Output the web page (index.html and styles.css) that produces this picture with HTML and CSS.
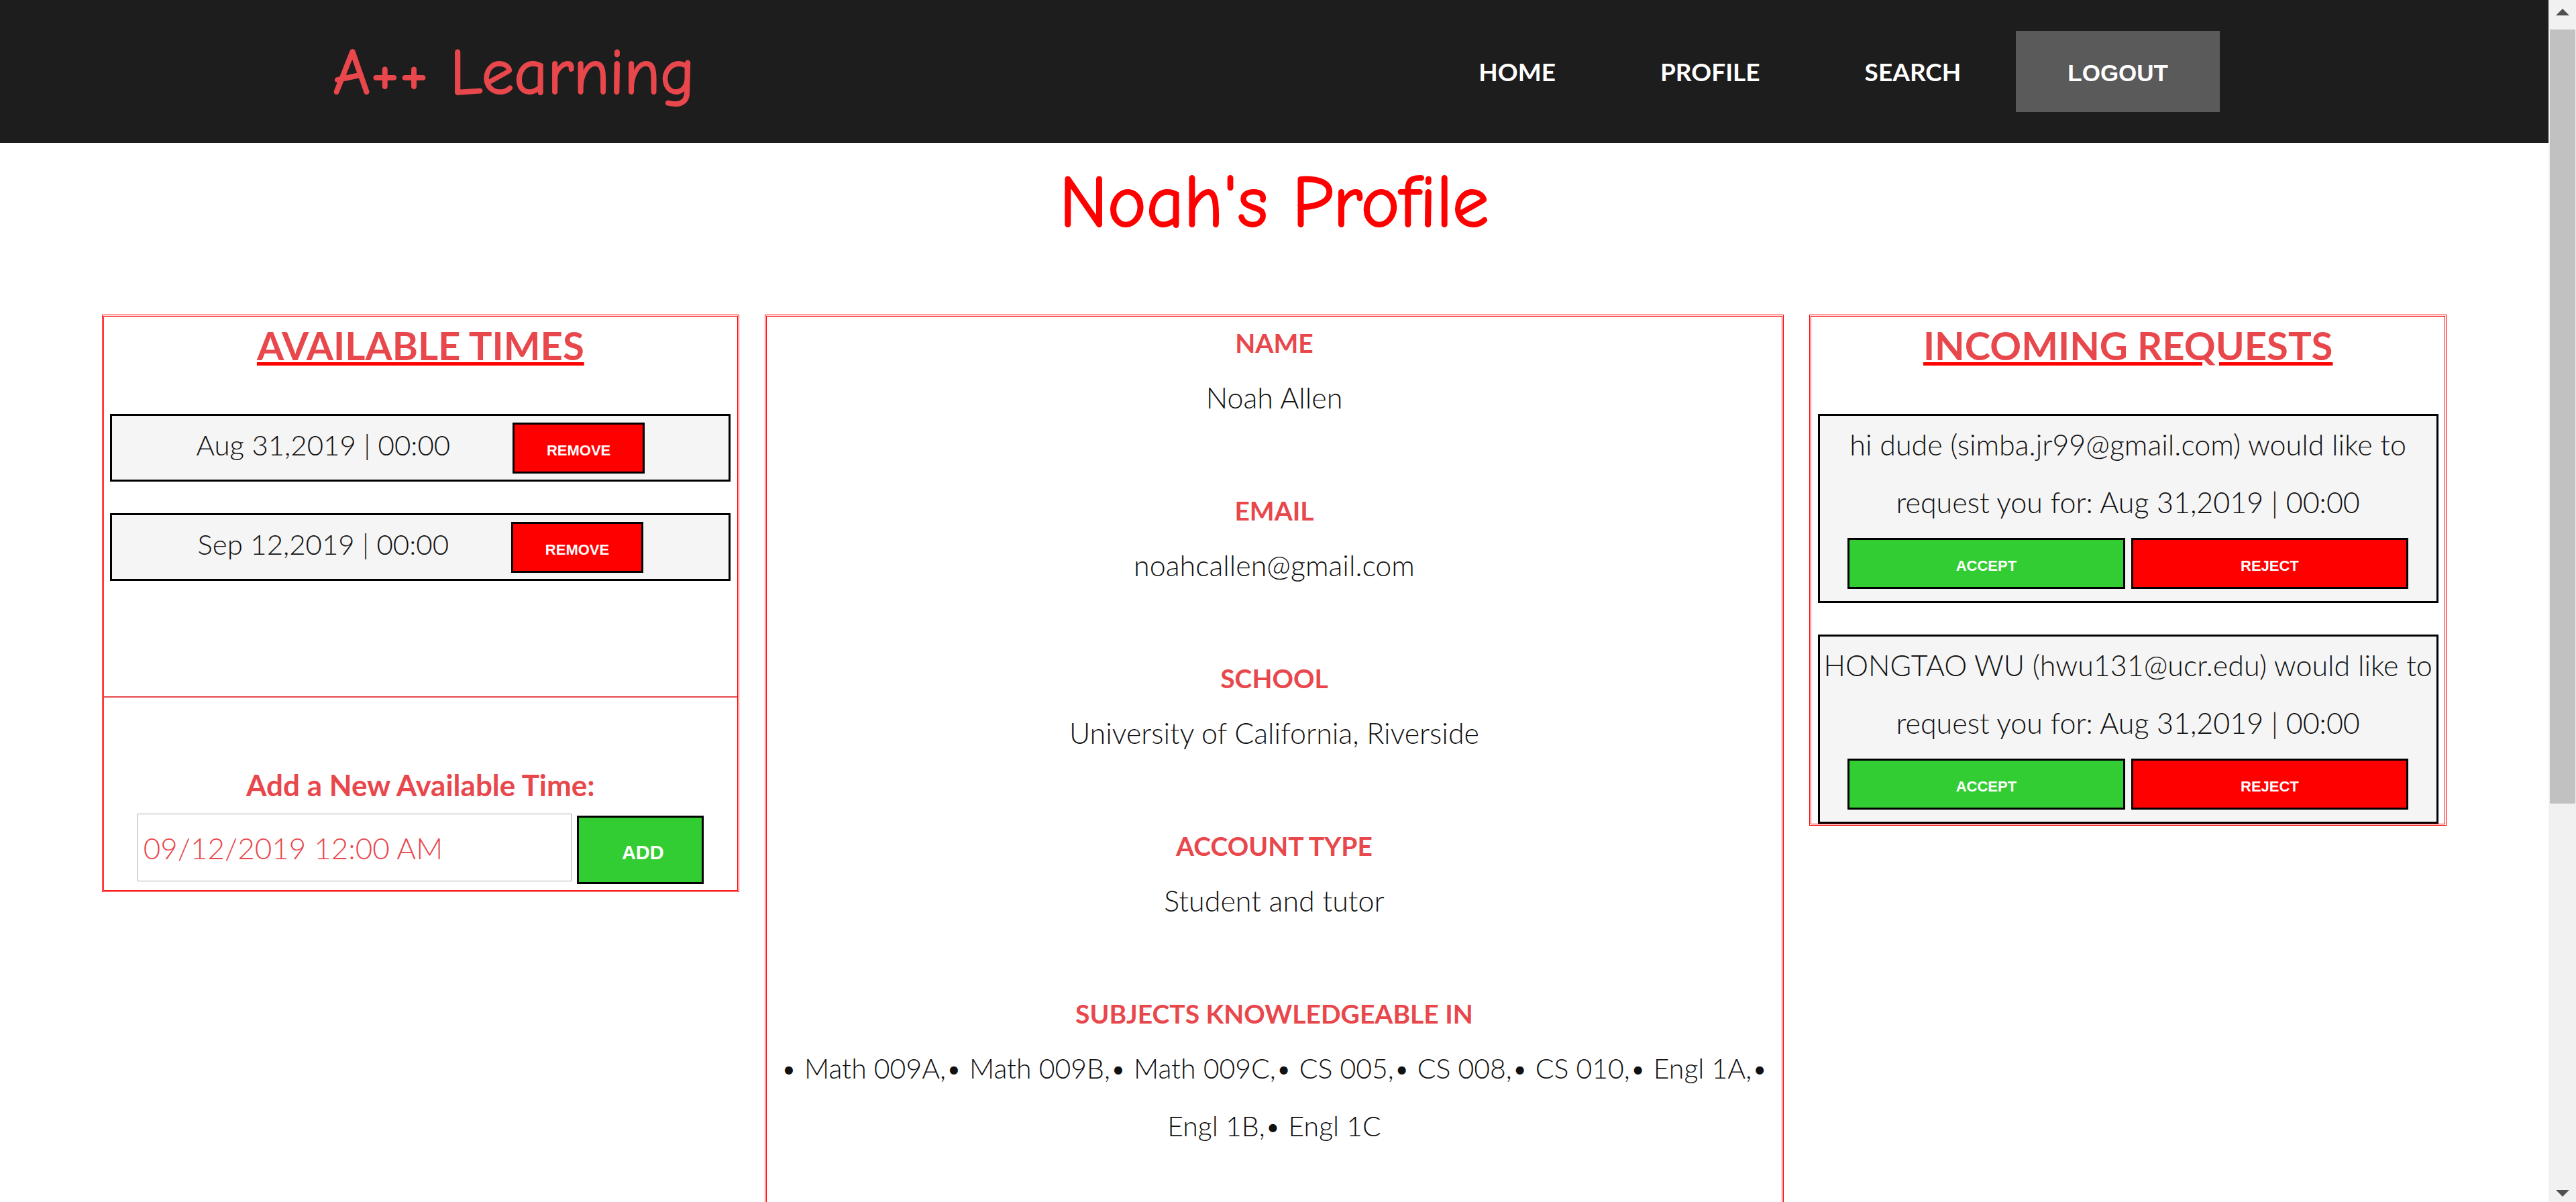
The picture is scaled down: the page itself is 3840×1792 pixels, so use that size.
FILE: index.html
```html
<!DOCTYPE html>
<html lang="en">
<head>
<meta charset="utf-8">
<title>A++ Learning - Profile</title>
<link rel="stylesheet" href="styles.css">
</head>
<body>
<div class="window">
  <div class="page">
    <header class="site-header">
      <a class="logo" href="#">A++ Learning</a>
      <nav class="nav">
        <a class="nav-link" href="#">HOME</a>
        <a class="nav-link" href="#">PROFILE</a>
        <a class="nav-link" href="#">SEARCH</a>
        <button class="logout" type="button">LOGOUT</button>
      </nav>
    </header>
    <h1 class="title">Noah's Profile</h1>
    <main class="columns">
      <section class="panel">
        <h2 class="panel-title">AVAILABLE TIMES</h2>
        <div class="times">
          <div class="card time">
            <span>Aug 31,2019 | 00:00</span>
            <button class="btn btn-red" type="button">REMOVE</button>
          </div>
          <div class="card time">
            <span>Sep 12,2019 | 00:00</span>
            <button class="btn btn-red" type="button">REMOVE</button>
          </div>
        </div>
        <form class="add">
          <label class="add-label" for="new-time">Add a New Available Time:</label>
          <div class="add-row">
            <input class="add-input" id="new-time" type="text" value="09/12/2019 12:00 AM">
            <button class="btn btn-green btn-add" type="button">ADD</button>
          </div>
        </form>
      </section>

      <section class="panel details">
        <h3 class="field">NAME</h3>
        <p class="value">Noah Allen</p>
        <h3 class="field">EMAIL</h3>
        <p class="value">noahcallen@gmail.com</p>
        <h3 class="field">SCHOOL</h3>
        <p class="value">University of California, Riverside</p>
        <h3 class="field">ACCOUNT TYPE</h3>
        <p class="value">Student and tutor</p>
        <h3 class="field">SUBJECTS KNOWLEDGEABLE IN</h3>
        <p class="value subjects">• Math 009A,• Math 009B,• Math 009C,• CS 005,• CS 008,• CS 010,• Engl 1A,• Engl 1B,• Engl 1C</p>
      </section>

      <section class="panel">
        <h2 class="panel-title">INCOMING REQUESTS</h2>
        <div class="card request">
          <p>hi dude (simba.jr99@gmail.com) would like to request you for: Aug 31,2019 | 00:00</p>
          <div class="actions">
            <button class="btn btn-green" type="button">ACCEPT</button>
            <button class="btn btn-red" type="button">REJECT</button>
          </div>
        </div>
        <div class="card request">
          <p>HONGTAO WU (hwu131@ucr.edu) would like to request you for: Aug 31,2019 | 00:00</p>
          <div class="actions">
            <button class="btn btn-green" type="button">ACCEPT</button>
            <button class="btn btn-red" type="button">REJECT</button>
          </div>
        </div>
      </section>
    </main>
  </div>
  <div class="scrollbar" aria-hidden="true">
    <svg class="arrow" viewBox="0 0 20 10"><path d="M0 10 L10 0 L20 10 Z"/></svg>
    <div class="track"><div class="thumb"></div></div>
    <svg class="arrow" viewBox="0 0 20 10"><path d="M0 0 L10 10 L20 0 Z"/></svg>
  </div>
</div>
</body>
</html>
```

FILE: styles.css
```css
* {
  box-sizing: border-box;
}

body {
  margin: 0;
  background: #fff;
  color: #111;
  font-family: Lato, "Liberation Sans", sans-serif;
  font-size: 43px;
  font-weight: 300;
  line-height: 86px;
}

h1, h2, h3, p {
  margin: 0;
}

.window {
  display: flex;
  height: 100vh;
}

.page {
  flex: 1;
  min-width: 0;
  overflow: hidden;
}

/* Header */
.site-header {
  display: flex;
  align-items: center;
  justify-content: space-between;
  height: 213px;
  padding: 0 490px 0 496px;
  background: #1d1d1d;
}

.logo,
.title {
  font-family: "Comic Sans MS", "Comic Neue", "Open Sans", sans-serif;
  font-weight: 400;
  -webkit-text-stroke: 2px currentColor;
}

.logo {
  padding-top: 4px;
  color: #e8474c;
  font-size: 97px;
  text-decoration: none;
}

.nav {
  display: flex;
  align-items: center;
}

.nav-link {
  padding: 0 78px;
  color: #fff;
  font-size: 37px;
  font-weight: 700;
  text-decoration: none;
}

.logout {
  height: 121px;
  margin-left: 4px;
  padding: 4px 77px 0;
  border: 0;
  background: #5a5a5a;
  color: #fff;
  font-family: "Liberation Sans", Arial, sans-serif;
  font-size: 35px;
  font-weight: 700;
}

.title {
  height: 256px;
  padding-top: 46px;
  color: #f00;
  font-size: 109px;
  text-align: center;
}

/* Columns */
.columns {
  display: grid;
  grid-template-columns: 25fr 40fr 25fr;
  column-gap: 38px;
  align-items: start;
  padding: 0 4%;
  text-align: center;
}

.panel {
  min-width: 0;
  border: 3px double #f00;
}

.panel-title {
  margin-bottom: 59px;
  color: #e8474c;
  font-size: 58px;
  font-weight: 700;
  line-height: 86px;
  text-decoration: underline;
  text-decoration-color: #f00;
}

.card {
  margin: 0 1%;
  border: 3px solid #000;
  background: #f5f5f5;
}

.card + .card {
  margin-top: 47px;
}

.btn {
  padding: 8px 0 0;
  border: 3px solid #000;
  color: #fff;
  font-family: "Liberation Sans", Arial, sans-serif;
  font-size: 22px;
  font-weight: 700;
}

.btn-red {
  background: #f00;
}

.btn-green {
  background: #32cd32;
}

.time {
  display: flex;
  justify-content: center;
  gap: 93px;
  font-size: 42px;
}

.time .btn {
  width: 197px;
  height: 76px;
  margin: 10px 0 9px;
}

.times {
  padding-bottom: 172px;
  border-bottom: 2px solid #e8474c;
}

.add {
  padding: 87px 0 9px;
}

.add-label {
  display: block;
  color: #e8474c;
  font-size: 44px;
  font-weight: 700;
}

.add-row {
  display: flex;
  justify-content: center;
  align-items: flex-end;
  gap: 8px;
}

.add-input {
  width: 647px;
  height: 101px;
  margin-bottom: 4px;
  padding: 0 8px;
  border: 1px solid #a9a9a9;
  background: #fff;
  color: #e8474c;
  font: inherit;
  font-size: 44px;
}

.btn-add {
  width: 189px;
  height: 102px;
  padding-left: 8px;
  font-size: 29px;
}

/* Profile details */
.details {
  padding-bottom: 172px;
}

.field {
  color: #e8474c;
  font-size: 39px;
  font-weight: 700;
  line-height: 78px;
}

.value {
  margin-bottom: 86px;
}

.subjects {
  padding: 0 16px;
  font-size: 41px;
}

/* Requests */
.request {
  padding-bottom: 18px;
}

.actions {
  display: flex;
  justify-content: center;
  gap: 9px;
  padding-top: 10px;
}

.actions .btn {
  width: 45%;
  height: 76px;
}

/* Scrollbar */
.scrollbar {
  display: flex;
  flex-direction: column;
  align-items: center;
  width: 41px;
  padding: 13px 0 8px;
  background: #f1f1f1;
}

.arrow {
  width: 20px;
  height: 10px;
  fill: #505050;
}

.track {
  flex: 1;
  width: 100%;
  padding: 21px 1px 0 2px;
}

.thumb {
  height: 1154px;
  background: #c1c1c1;
}
```
